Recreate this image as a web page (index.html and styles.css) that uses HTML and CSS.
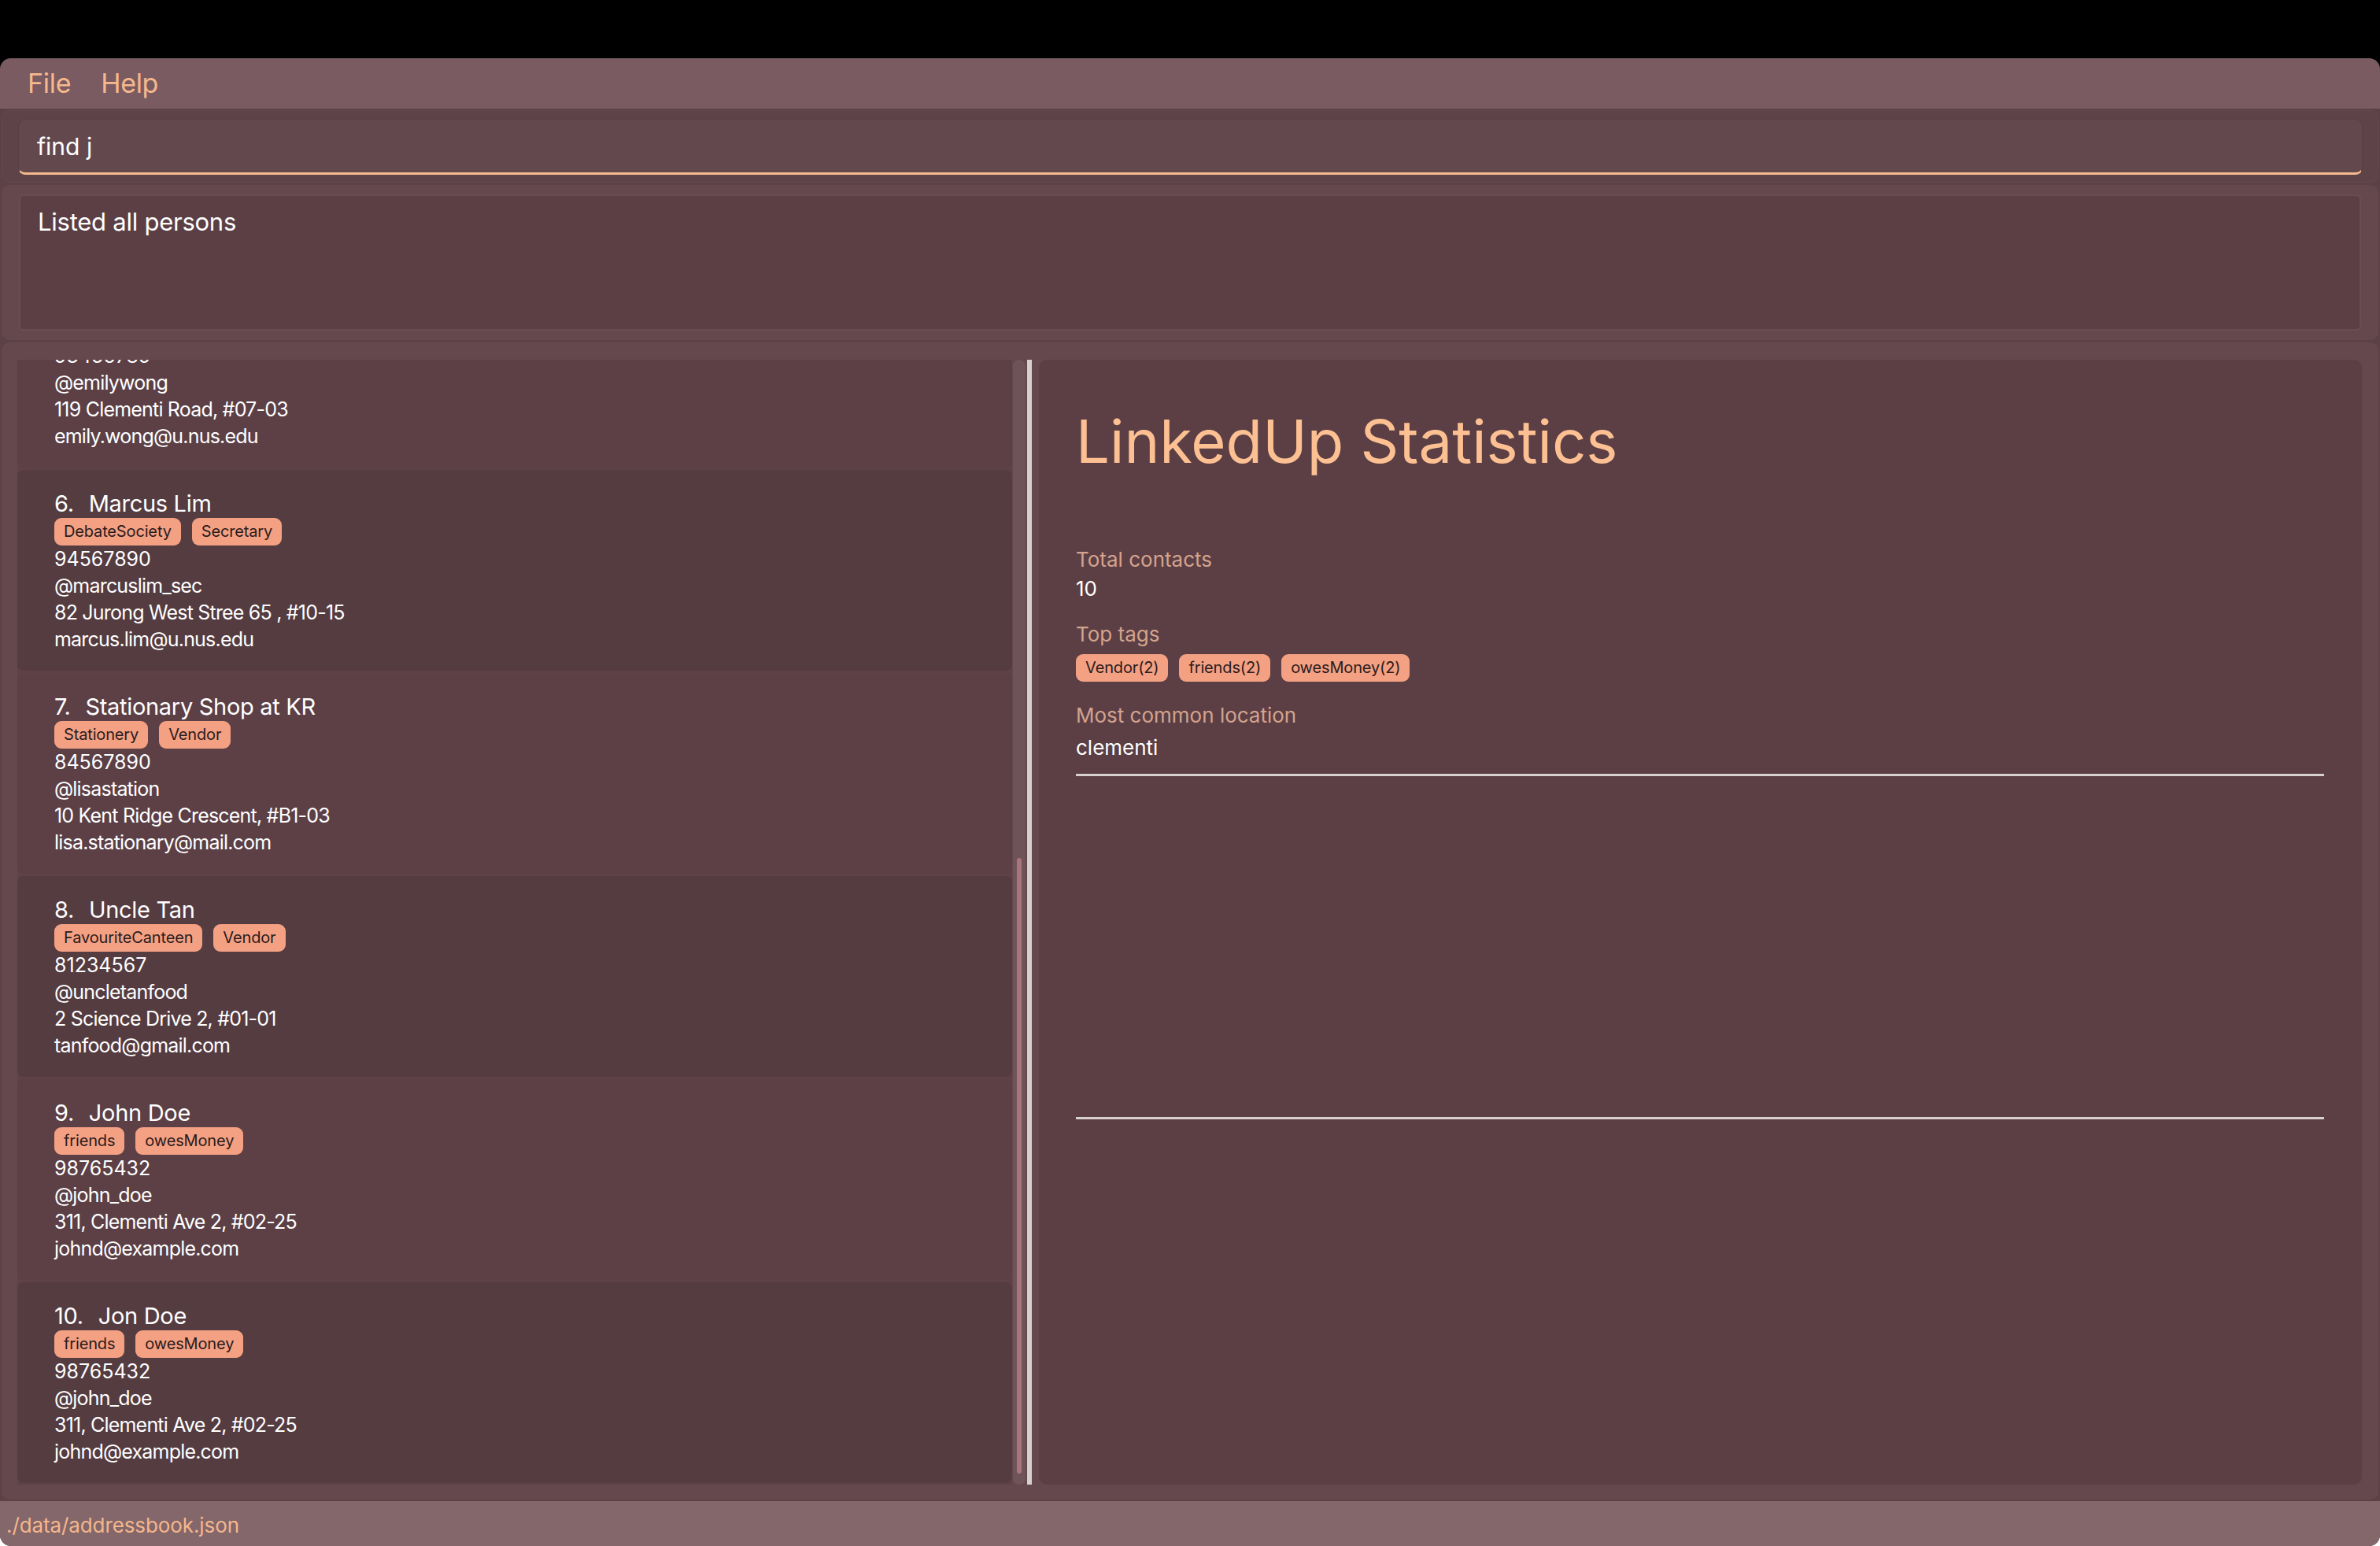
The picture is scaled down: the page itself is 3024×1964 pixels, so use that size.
FILE: index.html
```html
<!DOCTYPE html>
<html lang="en">
<head>
<meta charset="utf-8">
<title>LinkedUp</title>
<link rel="stylesheet" href="styles.css">
</head>
<body>
<div class="app">
  <nav class="menubar">
    <span class="menu-item">File</span>
    <span class="menu-item">Help</span>
  </nav>

  <section class="section command-section">
    <div class="command-box"><span class="command-text">find j</span></div>
  </section>

  <section class="section result-section">
    <div class="result-box">Listed all persons</div>
  </section>

  <section class="section main-section">
    <div class="list-pane">
      <div class="list-viewport">
        <div class="list-content">
          <article class="card light">
            <div class="name"><span class="idx">5. </span><span>Emily Wong</span></div>
            <div class="tags"><span class="tag">Classmate</span></div>
            <div class="detail phone">93456789</div>
            <div class="detail">@emilywong</div>
            <div class="detail">119 Clementi Road, #07-03</div>
            <div class="detail">emily.wong@u.nus.edu</div>
          </article>
          <article class="card dark">
            <div class="name"><span class="idx">6. </span><span>Marcus Lim</span></div>
            <div class="tags"><span class="tag">DebateSociety</span><span class="tag">Secretary</span></div>
            <div class="detail phone">94567890</div>
            <div class="detail">@marcuslim_sec</div>
            <div class="detail">82 Jurong West Stree 65 , #10-15</div>
            <div class="detail">marcus.lim@u.nus.edu</div>
          </article>
          <article class="card light">
            <div class="name"><span class="idx">7. </span><span>Stationary Shop at KR</span></div>
            <div class="tags"><span class="tag">Stationery</span><span class="tag">Vendor</span></div>
            <div class="detail phone">84567890</div>
            <div class="detail">@lisastation</div>
            <div class="detail">10 Kent Ridge Crescent, #B1-03</div>
            <div class="detail">lisa.stationary@mail.com</div>
          </article>
          <article class="card dark">
            <div class="name"><span class="idx">8. </span><span>Uncle Tan</span></div>
            <div class="tags"><span class="tag">FavouriteCanteen</span><span class="tag">Vendor</span></div>
            <div class="detail phone">81234567</div>
            <div class="detail">@uncletanfood</div>
            <div class="detail">2 Science Drive 2, #01-01</div>
            <div class="detail">tanfood@gmail.com</div>
          </article>
          <article class="card light">
            <div class="name"><span class="idx">9. </span><span>John Doe</span></div>
            <div class="tags"><span class="tag">friends</span><span class="tag">owesMoney</span></div>
            <div class="detail phone">98765432</div>
            <div class="detail">@john_doe</div>
            <div class="detail">311, Clementi Ave 2, #02-25</div>
            <div class="detail">johnd@example.com</div>
          </article>
          <article class="card dark">
            <div class="name"><span class="idx">10. </span><span>Jon Doe</span></div>
            <div class="tags"><span class="tag">friends</span><span class="tag">owesMoney</span></div>
            <div class="detail phone">98765432</div>
            <div class="detail">@john_doe</div>
            <div class="detail">311, Clementi Ave 2, #02-25</div>
            <div class="detail">johnd@example.com</div>
          </article>
        </div>
      </div>
      <div class="scrollbar"><div class="scroll-thumb"></div></div>
    </div>

    <div class="divider"></div>

    <div class="stats-pane">
      <h1 class="stats-title">LinkedUp Statistics</h1>
      <div class="stat-label label-first">Total contacts</div>
      <div class="stat-value value-first">10</div>
      <div class="stat-label label-gap">Top tags</div>
      <div class="stat-tags">
        <span class="tag">Vendor(2)</span>
        <span class="tag">friends(2)</span>
        <span class="tag">owesMoney(2)</span>
      </div>
      <div class="stat-label label-after-tags">Most common location</div>
      <div class="stat-value value-location">clementi</div>
      <div class="stats-chart"></div>
    </div>
  </section>

  <footer class="statusbar">./data/addressbook.json</footer>
</div>
</body>
</html>
```

FILE: styles.css
```css
* { box-sizing: border-box; }

html, body {
  margin: 0;
  padding: 0;
}

body {
  background: linear-gradient(to bottom, #000 0, #000 300px, #fff 300px);
  padding-top: 74px;
  font-family: "Inter", "Noto Sans", sans-serif;
  color: #fff;
  height: 1964px;
  overflow: hidden;
}

.app {
  height: 1890px;
  background: #5c4247;
  border-radius: 14px;
  overflow: hidden;
  display: flex;
  flex-direction: column;
}

/* Menu bar */
.menubar {
  height: 64px;
  flex: none;
  background: #795b61;
  padding-left: 16px;
  display: flex;
  border-radius: 14px 14px 0 0;
}

.menu-item {
  font-size: 34px;
  line-height: 64px;
  padding: 0 19px;
  color: #f6b88c;
  letter-spacing: -0.3px;
}

/* Generic outer section */
.section {
  margin: 0 2px;
  border-radius: 10px;
  flex: none;
}

/* Command box */
.command-section {
  margin-top: 2px;
  height: 92px;
  background: #5e4348;
  border: 1px solid #634a4f;
  padding: 10px 19px 9px 20px;
}

.command-box {
  height: 71px;
  background: #63494e;
  border: 1px solid #593e43;
  border-bottom: 3px solid #f7b98d;
  border-radius: 9px;
  padding: 16px 0 0 23px;
  font-size: 30px;
  line-height: 37px;
  color: #fff;
}

/* Result display */
.result-section {
  margin-top: 3px;
  height: 197px;
  background: #64484d;
  padding: 12px 22px;
}

.result-box {
  height: 173px;
  background: #5b3f45;
  border: 2px solid #694d52;
  border-radius: 6px;
  padding: 14px 22px;
  font-size: 31px;
  line-height: 37px;
  letter-spacing: -0.25px;
}

/* Main split area */
.main-section {
  margin-top: 3px;
  height: 1470px;
  background: #64484d;
  padding: 22px 21px 19px 20px;
  display: flex;
}

.list-pane {
  width: 1281px;
  flex: none;
  display: flex;
  gap: 1px;
}

.list-viewport {
  width: 1264px;
  height: 1429px;
  overflow: hidden;
  background: #5e4247;
}

.list-content {
  margin-top: -118px;
}

.card {
  height: 255px;
  margin-bottom: 3px;
  border-radius: 8px;
  padding: 25px 0 0 47px;
}

.card.light { background: #5c4046; }
.card.dark { background: #553c41; }

.name {
  font-size: 29px;
  line-height: 36px;
  height: 36px;
  letter-spacing: -0.3px;
  white-space: nowrap;
}

.idx { margin-right: 11px; }

.tags {
  display: flex;
  gap: 14px;
  height: 35px;
}

.tag {
  display: inline-block;
  height: 35px;
  line-height: 35px;
  font-size: 20px;
  padding: 0 12px;
  border-radius: 9px;
  background: #f4a083;
  color: #2a1b1c;
  letter-spacing: -0.15px;
  white-space: nowrap;
}

.detail {
  font-size: 25px;
  line-height: 34px;
  letter-spacing: -0.8px;
  white-space: nowrap;
}

.detail.phone { letter-spacing: 0; }

.scrollbar {
  width: 16px;
  height: 1429px;
  background: #6e5358;
  border-radius: 8px;
  padding-top: 633px;
}

.scroll-thumb {
  width: 6px;
  height: 782px;
  margin-left: 5px;
  border-radius: 3px;
  background: #a8757b;
}

.divider {
  width: 6px;
  flex: none;
  margin-left: 2px;
  background: #d6d0d1;
}

/* Statistics pane */
.stats-pane {
  flex: 1;
  margin-left: 9px;
  background: #5b3f45;
  border-radius: 10px;
  padding: 58px 48px 0 47px;
}

.stats-title {
  margin: 0;
  font-size: 76px;
  font-weight: 400;
  line-height: 91px;
  color: #fdc092;
}

.stat-label {
  font-size: 26px;
  line-height: 32px;
  color: #d4a38d;
}

.stat-value {
  font-size: 26px;
  line-height: 32px;
  color: #fff;
}

.label-first { margin-top: 89px; }
.value-first { margin-top: 5px; }
.label-gap { margin-top: 26px; }
.label-after-tags { margin-top: 27px; }
.value-location { margin-top: 9px; }

.stat-tags {
  margin-top: 9px;
  display: flex;
  gap: 14px;
}

.stats-chart {
  margin-top: 17px;
  height: 439px;
  border-top: 3px solid #d7cfd0;
  border-bottom: 3px solid #d7cfd0;
}

/* Status bar */
.statusbar {
  margin-top: 2px;
  flex: 1;
  background: #83676b;
  padding: 2px 0 0 8px;
  font-size: 26px;
  line-height: 57px;
  letter-spacing: -0.1px;
  color: #f5b68b;
  border-radius: 0 0 14px 14px;
}
```
